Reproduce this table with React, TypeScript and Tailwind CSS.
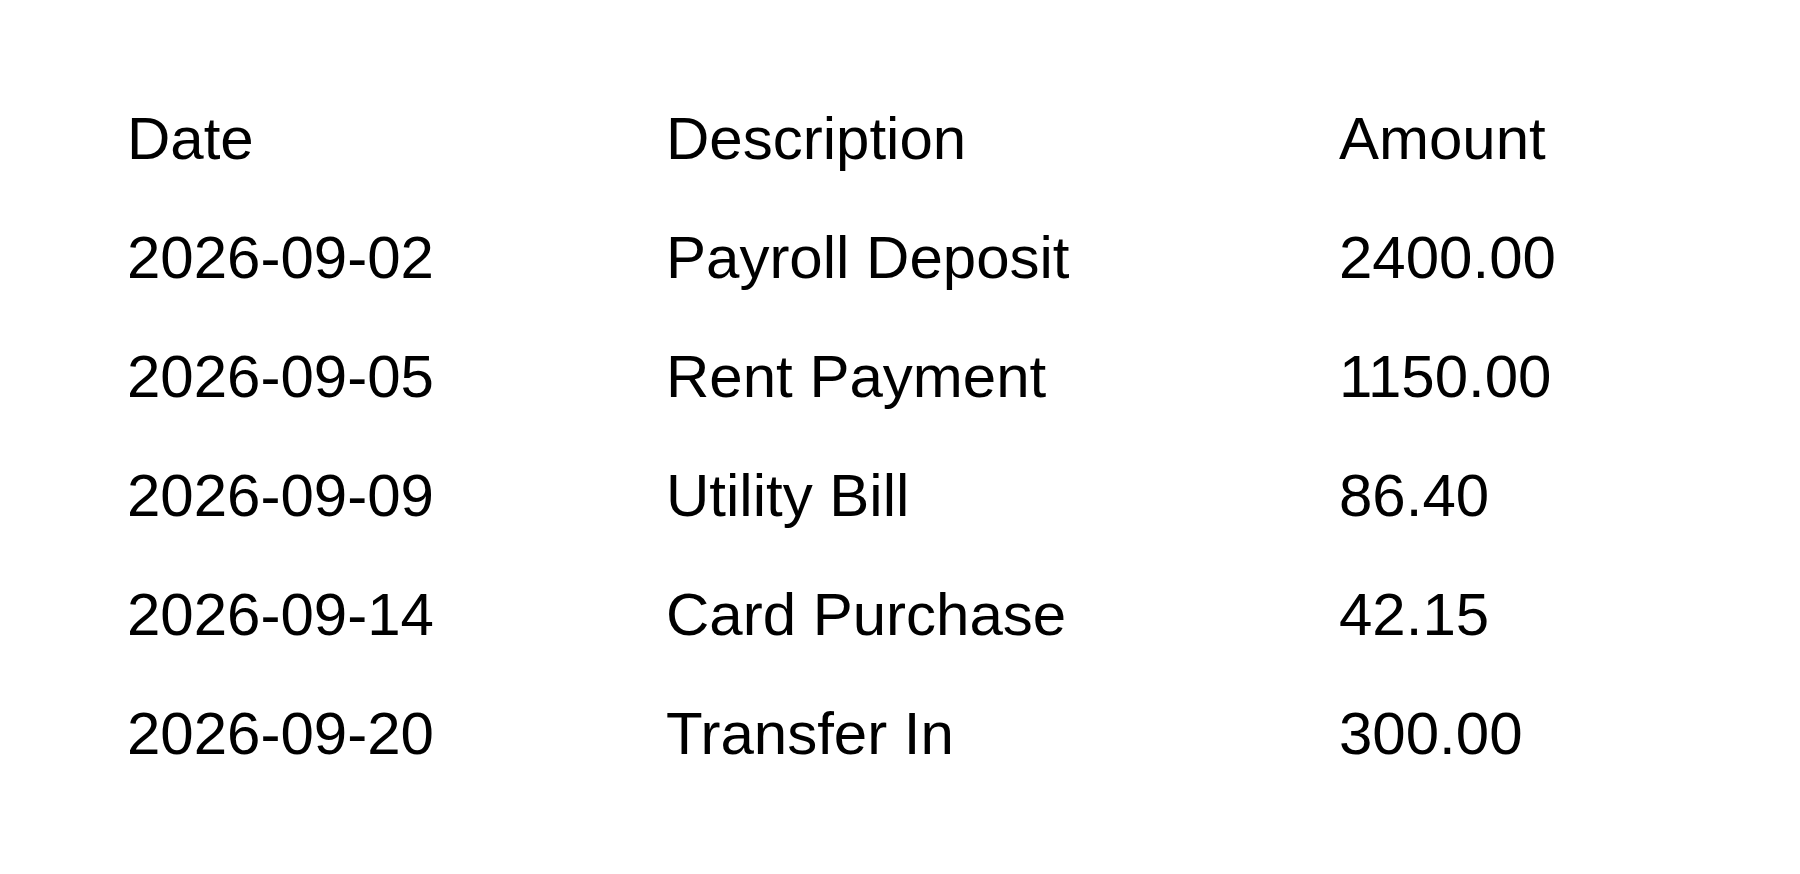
import React from 'react';

const rows = [
  { date: '2026-09-02', description: 'Payroll Deposit', amount: '2400.00' },
  { date: '2026-09-05', description: 'Rent Payment', amount: '1150.00' },
  { date: '2026-09-09', description: 'Utility Bill', amount: '86.40' },
  { date: '2026-09-14', description: 'Card Purchase', amount: '42.15' },
  { date: '2026-09-20', description: 'Transfer In', amount: '300.00' },
];

const App: React.FC = () => {
  return (
    <div className="min-h-screen bg-white text-black font-['Liberation_Sans',Arial,sans-serif]">
      <div className="pt-[79px] pl-[127px] text-[60px] leading-[119px]">
        {/* Header */}
        <div className="grid grid-cols-[539px_673px_1fr]">
          <div>Date</div>
          <div>Description</div>
          <div>Amount</div>
        </div>

        {/* Rows */}
        {rows.map((r) => (
          <div key={r.date} className="grid grid-cols-[539px_673px_1fr]">
            <div>{r.date}</div>
            <div>{r.description}</div>
            <div>{r.amount}</div>
          </div>
        ))}
      </div>
    </div>
  );
};

export default App;
